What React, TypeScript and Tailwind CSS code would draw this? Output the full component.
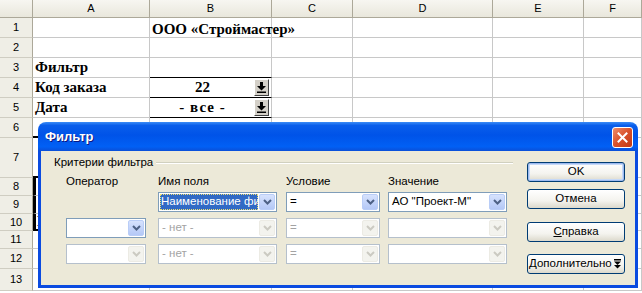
import React from "react";

// Таблица + окно «Фильтр» в стиле Windows XP

const colWidths = [117, 122, 81, 140, 91, 58];
const colNames = ["A", "B", "C", "D", "E", "F"];
const rowHeights = [20, 20, 20, 20, 20, 20, 40, 18, 18, 17, 18, 20, 22];

const serif = "font-['Liberation_Serif',serif] font-bold text-[15px] text-black";

function CellButton() {
  return (
    <div className="absolute right-[2px] top-[1px] flex h-[17px] w-[15px] items-center justify-center border border-t-white border-l-white border-r-[#404040] border-b-[#404040] bg-[#d4d0c8]">
      <svg width="9" height="11" viewBox="0 0 9 11">
        <path d="M3 0h3v4h3L4.5 8.5 0 4h3z" fill="#000" />
        <rect x="0" y="9.5" width="9" height="1.5" fill="#000" />
      </svg>
    </div>
  );
}

function cellContent(r: number, c: number) {
  // r: номер строки с 1, c: столбец с 0 (A = 0)
  if (r === 1 && c === 1)
    return <span className={`${serif} absolute left-[2px] top-[0px] z-10 whitespace-nowrap`}>ООО «Строймастер»</span>;
  if (c === 0 && r === 3) return <span className={`${serif} pl-[2px]`}>Фильтр</span>;
  if (c === 0 && r === 4) return <span className={`${serif} pl-[2px]`}>Код заказа</span>;
  if (c === 0 && r === 5) return <span className={`${serif} pl-[2px]`}>Дата</span>;
  if (c === 0 && r === 10) return <span className={`${serif} pl-[1px]`}>Итого</span>;
  if (c === 1 && r === 4)
    return (
      <>
        <span className={`${serif} w-full pr-[16px] text-center`}>22</span>
        <CellButton />
      </>
    );
  if (c === 1 && r === 5)
    return (
      <>
        <span className={`${serif} w-full pr-[16px] text-center tracking-[1px]`}>- все -</span>
        <CellButton />
      </>
    );
  return null;
}

function cellClass(r: number, c: number) {
  let cls = "relative flex items-center shrink-0 border-r border-b border-r-[#c8c8c8] border-b-[#c8c8c8] bg-white overflow-visible";
  if (c === 0 && r >= 3 && r <= 5) cls += " bg-[#ebe9db]";
  if (c === 1 && (r === 3 || r === 4 || r === 5)) cls += " border-b-black";
  if (c === 0 && (r === 6 || r === 7 || r === 10)) cls += " border-b-black border-b-2";
  if (c === 0 && r >= 8 && r <= 10) cls += " border-l-[3px] border-l-black";
  return cls;
}

function Sheet() {
  return (
    <div className="flex flex-col font-['Liberation_Sans',sans-serif] text-[11px] text-black">
      <div className="flex h-[18px]">
        <div className="h-full w-[33px] shrink-0 border-r border-b border-[#aca899] bg-[linear-gradient(#f7f6f1,#e9e7dc)]" />
        {colNames.map((n, i) => (
          <div
            key={n}
            style={{ width: colWidths[i] }}
            className="flex h-full shrink-0 items-center justify-center border-r border-b border-r-[#aca899] border-b-[#aca899] bg-[linear-gradient(#f7f6f1,#e9e7dc)]"
          >
            {n}
          </div>
        ))}
      </div>
      {rowHeights.map((h, ri) => (
        <div key={ri} className="flex" style={{ height: h }}>
          <div className="flex w-[33px] shrink-0 items-center justify-center border-r border-b border-r-[#aca899] border-b-[#cfcdc2] bg-[#efeee6]">
            {ri + 1}
          </div>
          {colWidths.map((w, ci) => (
            <div key={ci} style={{ width: w }} className={cellClass(ri + 1, ci)}>
              {cellContent(ri + 1, ci)}
            </div>
          ))}
        </div>
      ))}
    </div>
  );
}

function Chevron({ color }: { color: string }) {
  return (
    <svg width="9" height="6" viewBox="0 0 9 6">
      <path d="M1 1l3.5 3.5L8 1" stroke={color} strokeWidth="2" fill="none" />
    </svg>
  );
}

function Combo({
  width,
  text,
  disabled,
  arrowEnabled,
  selected,
}: {
  width: number;
  text?: string;
  disabled?: boolean;
  arrowEnabled?: boolean;
  selected?: boolean;
}) {
  return (
    <div
      style={{ width }}
      className={`relative flex h-[20px] shrink-0 items-center border bg-white ${
        disabled ? "border-[#b5c0cc]" : "border-[#7f9db9]"
      }`}
    >
      {selected ? (
        <div className="ml-[1px] flex h-[16px] min-w-0 flex-1 items-center whitespace-nowrap border border-dotted border-[#f0e070] bg-[#316ac5] text-white">
          {text}
        </div>
      ) : (
        <div
          className={`min-w-0 flex-1 whitespace-nowrap pl-[3px] ${
            disabled ? "text-[#a3a3a3]" : "text-black"
          }`}
        >
          {text}
        </div>
      )}
      <div
        className={`mx-[1px] flex h-[16px] w-[16px] shrink-0 items-center justify-center rounded-[2px] ${
          arrowEnabled
            ? "bg-[linear-gradient(#d6e2fd,#b4c8f6)] border border-[#b9cdf7]"
            : "bg-[#f3f3ee] border border-[#ecebe4]"
        }`}
      >
        <Chevron color={arrowEnabled ? "#4d6185" : "#cbcac2"} />
      </div>
    </div>
  );
}

function XpButton({ children, def, mt }: { children: React.ReactNode; def?: boolean; mt: string }) {
  return (
    <div
      className={`${mt} flex h-[20px] w-[98px] items-center justify-center rounded-[3px] border border-[#003c74] bg-[linear-gradient(#ffffff,#f4f3ee_60%,#dcd9cc)] text-black ${
        def ? "shadow-[inset_0_0_0_1px_#9dbaf0,inset_0_0_0_2px_#c6d9f7]" : ""
      }`}
    >
      {children}
    </div>
  );
}

function FilterDialog() {
  return (
    <div className="absolute left-[38px] top-[122px] z-20 flex h-[166px] w-[600px] flex-col font-['Liberation_Sans',sans-serif] text-[11.5px]">
      {/* заголовок окна */}
      <div className="relative flex h-[29px] shrink-0 items-center rounded-t-[8px] bg-[linear-gradient(#3b8cf6_0%,#0a5eeb_12%,#0053e8_45%,#0160f5_85%,#0a4fd8_100%)] pl-[7px]">
        <span className="text-[13px] font-bold text-white [text-shadow:1px_1px_#0a1883]">Фильтр</span>
        <div className="absolute right-[5px] top-[5px] flex h-[21px] w-[21px] items-center justify-center rounded-[3px] border border-white bg-[linear-gradient(135deg,#f08d6a,#d8502a_50%,#c13a17)]">
          <svg width="11" height="11" viewBox="0 0 11 11">
            <path d="M1.5 1.5l8 8M9.5 1.5l-8 8" stroke="#fff" strokeWidth="2" strokeLinecap="square" />
          </svg>
        </div>
      </div>
      {/* тело окна */}
      <div className="flex flex-1 border-x-[3px] border-b-[3px] border-[#0b4be0] bg-[#ece9d8]">
        <div className="flex w-[472px] flex-col pl-[13px]">
          <div className="mt-[5px] flex h-[14px] items-center">
            <span className="whitespace-nowrap pr-[3px] text-black">Критерии фильтра</span>
            <div className="h-[2px] flex-1 border-t border-b border-t-[#d0d0bf] border-b-white" />
          </div>
          <div className="ml-[12px] mt-[5px] flex h-[14px] items-center text-black">
            <span className="w-[92px]">Оператор</span>
            <span className="w-[128px]">Имя поля</span>
            <span className="w-[102px]">Условие</span>
            <span>Значение</span>
          </div>
          <div className="ml-[12px] mt-[3px] flex flex-col gap-[6px]">
            <div className="flex">
              <div className="w-[92px] shrink-0" />
              <Combo width={119} text="Наименование фир" selected arrowEnabled />
              <div className="w-[9px] shrink-0" />
              <Combo width={94} text="=" arrowEnabled />
              <div className="w-[8px] shrink-0" />
              <Combo width={119} text={'АО "Проект-М"'} arrowEnabled />
            </div>
            <div className="flex">
              <Combo width={80} arrowEnabled />
              <div className="w-[12px] shrink-0" />
              <Combo width={119} text="- нет -" disabled />
              <div className="w-[9px] shrink-0" />
              <Combo width={94} text="=" disabled />
              <div className="w-[8px] shrink-0" />
              <Combo width={119} disabled />
            </div>
            <div className="flex">
              <Combo width={80} disabled />
              <div className="w-[12px] shrink-0" />
              <Combo width={119} text="- нет -" disabled />
              <div className="w-[9px] shrink-0" />
              <Combo width={94} text="=" disabled />
              <div className="w-[8px] shrink-0" />
              <Combo width={119} disabled />
            </div>
          </div>
        </div>
        <div className="ml-[14px] flex flex-col">
          <XpButton def mt="mt-[11px]">OK</XpButton>
          <XpButton mt="mt-[7px]">Отмена</XpButton>
          <XpButton mt="mt-[13px]">
            <span>
              <span className="underline">С</span>правка
            </span>
          </XpButton>
          <XpButton mt="mt-[12px]">
            <span className="flex w-full items-center justify-between pl-[1px] pr-[3px]">
              <span>Дополнительно</span>
              <svg width="7" height="10" viewBox="0 0 7 10">
                <rect x="0" y="0" width="7" height="1.5" fill="#000" />
                <path d="M0 2.5h7L3.5 6z" fill="#000" />
                <path d="M0 6h7L3.5 9.5z" fill="#000" />
              </svg>
            </span>
          </XpButton>
        </div>
      </div>
    </div>
  );
}

export default function App() {
  return (
    <div className="relative h-[293px] w-[642px] overflow-hidden bg-white">
      <Sheet />
      <FilterDialog />
    </div>
  );
}
